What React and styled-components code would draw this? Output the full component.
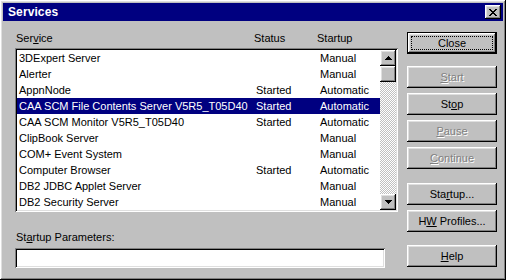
import React from "react";
import styled, { createGlobalStyle } from "styled-components";

const GlobalStyle = createGlobalStyle`
  html, body { margin: 0; padding: 0; background: #c0c0c0; }
  body { font-family: "Liberation Sans", Arial, sans-serif; font-size: 11px; }
`;

const raised = `
  box-shadow: inset -1px -1px #000, inset 1px 1px #fff,
    inset -2px -2px #808080, inset 2px 2px #dfdfdf;
`;

const sunken = `
  box-shadow: inset 1px 1px #808080, inset -1px -1px #fff,
    inset 2px 2px #000, inset -2px -2px #dfdfdf;
`;

const Window = styled.div`
  width: 506px;
  height: 280px;
  box-sizing: border-box;
  padding: 3px;
  background: #c0c0c0;
  ${raised}
  display: flex;
  flex-direction: column;
  color: #000;
`;

const TitleBar = styled.div`
  height: 18px;
  background: #000080;
  display: flex;
  align-items: center;
  padding: 0 2px 0 5px;
`;

const Title = styled.span`
  flex: 1;
  color: #fff;
  font-weight: bold;
  font-size: 12px;
  letter-spacing: 0.1px;
`;

const TitleButton = styled.div`
  width: 16px;
  height: 14px;
  background: #c0c0c0;
  ${raised}
  display: flex;
  align-items: center;
  justify-content: center;
`;

const Body = styled.div`
  flex: 1;
  display: flex;
  padding-left: 12px;
  padding-right: 6px;
`;

const LeftColumn = styled.div`
  width: 383px;
  padding-top: 10px;
  display: flex;
  flex-direction: column;
`;

const HeaderRow = styled.div`
  display: grid;
  grid-template-columns: 238px 63px 1fr;
  height: 17px;
  line-height: 14px;
  padding-left: 1px;
`;

const ListBox = styled.div`
  height: 164px;
  box-sizing: border-box;
  padding: 2px;
  background: #fff;
  ${sunken}
  display: flex;
`;

const Rows = styled.div`
  flex: 1;
  display: flex;
  flex-direction: column;
`;

const Row = styled.div`
  display: grid;
  grid-template-columns: 237px 64px 1fr;
  height: 16px;
  line-height: 16px;
  padding-left: 2px;
  white-space: nowrap;
  background: ${(p) => (p.$selected ? "#000080" : "transparent")};
  color: ${(p) => (p.$selected ? "#fff" : "#000")};
`;

const ScrollBar = styled.div`
  width: 16px;
  display: flex;
  flex-direction: column;
`;

const ScrollButton = styled.div`
  width: 16px;
  height: 16px;
  background: #c0c0c0;
  ${raised}
  display: flex;
  align-items: center;
  justify-content: center;
`;

const Track = styled.div`
  flex: 1;
  background: repeating-conic-gradient(#c0c0c0 0 25%, #fff 0 50%) 0 0 / 2px 2px;
`;

const FieldLabel = styled.div`
  margin-top: 18px;
  height: 14px;
  line-height: 14px;
  padding-left: 1px;
`;

const TextField = styled.div`
  margin-top: 4px;
  width: 370px;
  height: 20px;
  box-sizing: border-box;
  background: #fff;
  ${sunken}
`;

const RightColumn = styled.div`
  margin-left: auto;
  width: 90px;
  padding-top: 11px;
  display: flex;
  flex-direction: column;
`;

const Button = styled.div`
  position: relative;
  height: 22px;
  box-sizing: border-box;
  margin-top: ${(p) => p.$gap || 0}px;
  background: #c0c0c0;
  display: flex;
  align-items: center;
  justify-content: center;
  line-height: 14px;
  color: ${(p) => (p.$disabled ? "#808080" : "#000")};
  text-shadow: ${(p) => (p.$disabled ? "1px 1px #fff" : "none")};
  ${(p) =>
    p.$default
      ? `border: 1px solid #000; box-shadow: inset -1px -1px #000, inset 1px 1px #fff, inset -2px -2px #808080, inset 2px 2px #dfdfdf;`
      : raised}
`;

const ButtonLabel = styled.span`
  white-space: pre;
`;

const Focus = styled.span`
  position: absolute;
  inset: 3px;
  border: 1px dotted #000;
`;

const ArrowUp = () => (
  <svg width="7" height="4" viewBox="0 0 7 4">
    <path d="M3 0h1v1h1v1h1v1h1v1H0V3h1V2h1V1h1z" fill="#000" />
  </svg>
);

const ArrowDown = () => (
  <svg width="7" height="4" viewBox="0 0 7 4">
    <path d="M0 0h7v1H6v1H5v1H4v1H3V3H2V2H1V1H0z" fill="#000" />
  </svg>
);

const CloseGlyph = () => (
  <svg width="8" height="7" viewBox="0 0 8 7" shapeRendering="crispEdges">
    <path
      d="M0 0h2v1h1v1h2V1h1V0h2v1H7v1H6v1H5v1h1v1h1v1h1v1H6V6H5V5H3v1H2v1H0V6h1V5h1V4h1V3H2V2H1V1H0z"
      fill="#000"
    />
  </svg>
);

const services = [
  ["3DExpert Server", "", "Manual"],
  ["Alerter", "", "Manual"],
  ["AppnNode", "Started", "Automatic"],
  ["CAA SCM File Contents Server V5R5_T05D40", "Started", "Automatic"],
  ["CAA SCM Monitor V5R5_T05D40", "Started", "Automatic"],
  ["ClipBook Server", "", "Manual"],
  ["COM+ Event System", "", "Manual"],
  ["Computer Browser", "Started", "Automatic"],
  ["DB2 JDBC Applet Server", "", "Manual"],
  ["DB2 Security Server", "", "Manual"],
];

export default function App() {
  return (
    <>
      <GlobalStyle />
      <Window>
        <TitleBar>
          <Title>Services</Title>
          <TitleButton>
            <CloseGlyph />
          </TitleButton>
        </TitleBar>
        <Body>
          <LeftColumn>
            <HeaderRow>
              <span>
                Ser<u>v</u>ice
              </span>
              <span>Status</span>
              <span>Startup</span>
            </HeaderRow>
            <ListBox>
              <Rows>
                {services.map(([name, status, startup], i) => (
                  <Row key={name} $selected={i === 3}>
                    <span>{name}</span>
                    <span>{status}</span>
                    <span>{startup}</span>
                  </Row>
                ))}
              </Rows>
              <ScrollBar>
                <ScrollButton>
                  <ArrowUp />
                </ScrollButton>
                <ScrollButton />
                <Track />
                <ScrollButton>
                  <ArrowDown />
                </ScrollButton>
              </ScrollBar>
            </ListBox>
            <FieldLabel>
              St<u>a</u>rtup Parameters:
            </FieldLabel>
            <TextField />
          </LeftColumn>
          <RightColumn>
            <Button $default>
              <Focus />
              <ButtonLabel>Close</ButtonLabel>
            </Button>
            <Button $gap={12} $disabled>
              <ButtonLabel>
                <u>S</u>tart
              </ButtonLabel>
            </Button>
            <Button $gap={5}>
              <ButtonLabel>
                St<u>o</u>p
              </ButtonLabel>
            </Button>
            <Button $gap={5} $disabled>
              <ButtonLabel>
                <u>P</u>ause
              </ButtonLabel>
            </Button>
            <Button $gap={5} $disabled>
              <ButtonLabel>
                <u>C</u>ontinue
              </ButtonLabel>
            </Button>
            <Button $gap={14}>
              <ButtonLabel>
                Sta<u>r</u>tup...
              </ButtonLabel>
            </Button>
            <Button $gap={5}>
              <ButtonLabel>
                H<u>W</u> Profiles...
              </ButtonLabel>
            </Button>
            <Button $gap={13}>
              <ButtonLabel>
                <u>H</u>elp
              </ButtonLabel>
            </Button>
          </RightColumn>
        </Body>
      </Window>
    </>
  );
}
